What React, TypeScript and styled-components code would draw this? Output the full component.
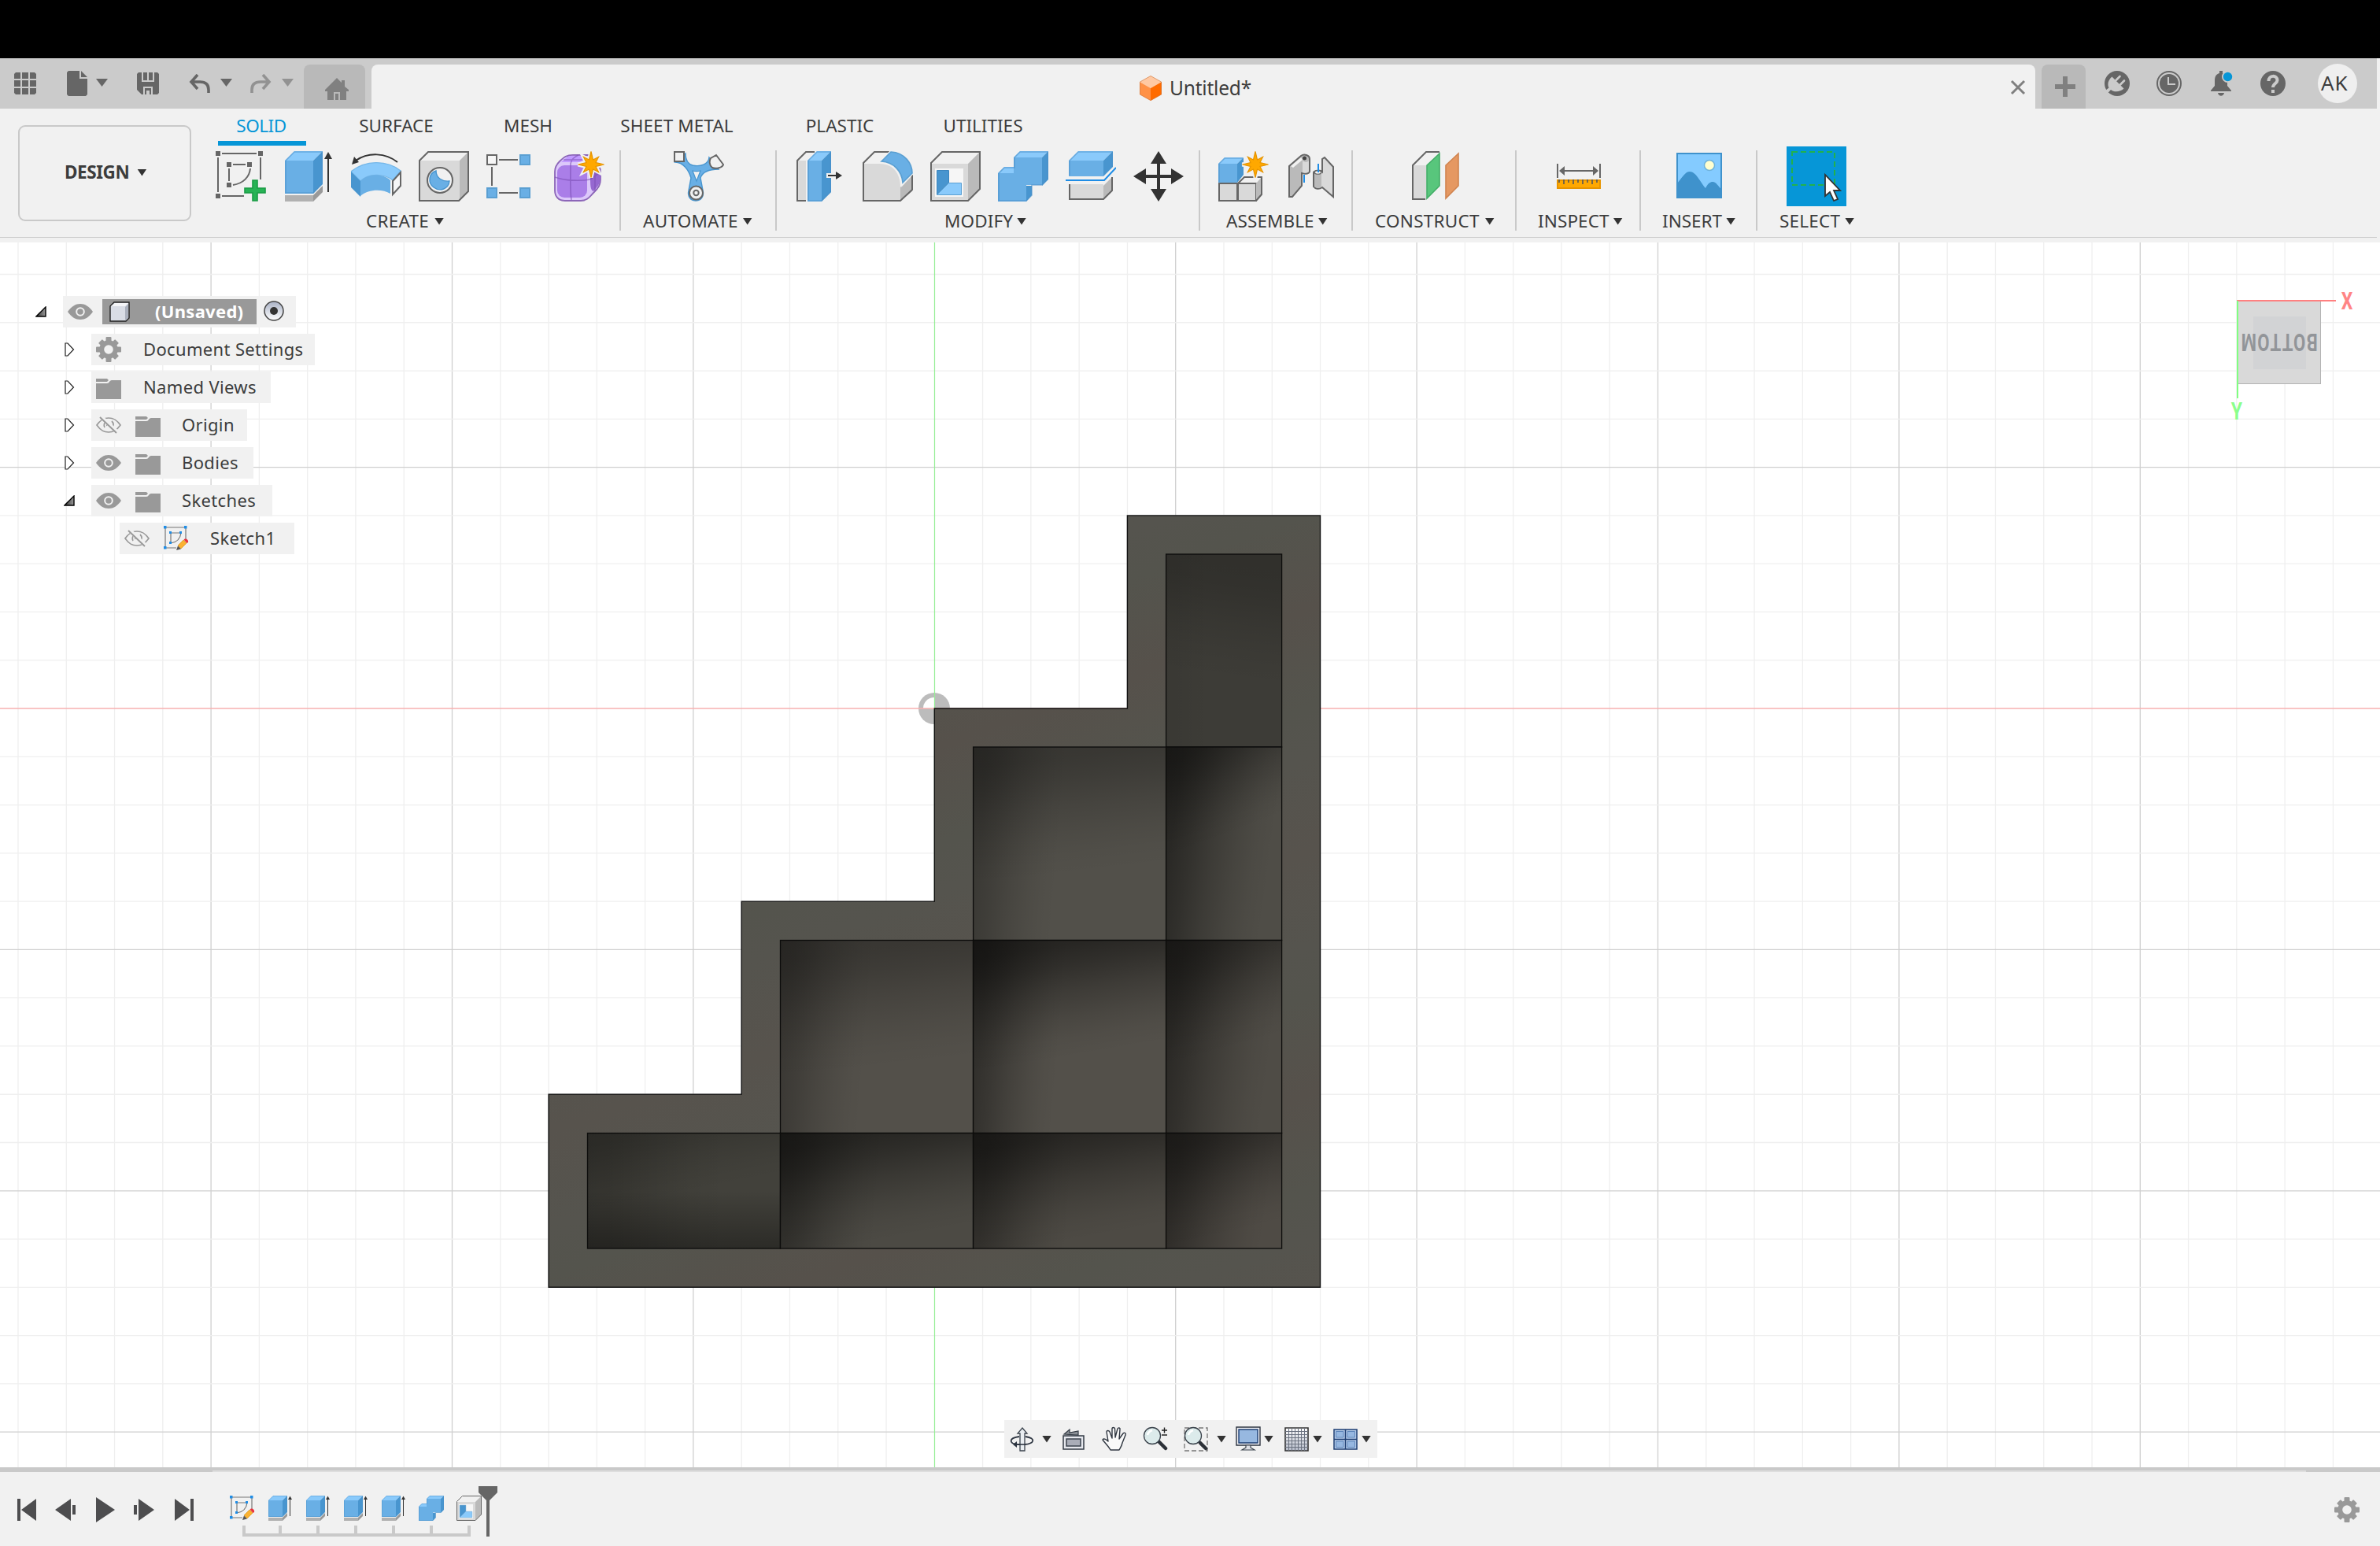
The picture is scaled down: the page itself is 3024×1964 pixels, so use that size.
import React from 'react';
import styled, { createGlobalStyle } from 'styled-components';

const sans = '"Noto Sans", "Open Sans", sans-serif';
const C = {
  ink: '#3c3c3c', icon: '#666', panel: '#f1f1f1', bar: '#cbcbcb', rule: '#c9c9c9',
  blue: '#0696d7', front: '#69afe5', light: '#8acafb', side: '#4895cf', edge: '#5a9fd2',
  grey: '#d9d9d9', greySide: '#bababa',
};

const Global = createGlobalStyle`
  html, body { margin: 0; background: #fff; overflow: hidden; }
  * { box-sizing: border-box; }
  svg { display: block; flex: none; }
`;

const Screen = styled.div`
  width: 3024px; height: 1964px; display: flex; flex-direction: column;
  font-family: ${sans}; color: ${C.ink}; background: ${C.panel}; overflow: hidden;
`;
const Notch = styled.div`height: 74px; flex: none; background: #000;`;

/* ---------- title bar ---------- */
const TitleBar = styled.header`
  height: 64px; width: 3020px; flex: none; display: flex; background: ${C.bar};
`;
const QuickTools = styled.div`width: 386px; display: flex; align-items: flex-start; padding-left: 18px;`;
const Slot = styled.div<{ $l?: number; $t?: number }>`
  flex: none; margin-left: ${p => p.$l ?? 0}px; margin-top: ${p => p.$t ?? 0}px;
`;
const SideTab = styled.div<{ $w: number }>`
  width: ${p => p.$w}px; height: 56px; margin-top: 8px; flex: none; background: #b9b9b9;
  border-radius: 8px 8px 0 0; display: flex; justify-content: center;
`;
const DocTab = styled.div`
  width: 2114px; height: 56px; margin: 8px 8px 0 8px; flex: none; background: ${C.panel};
  border-radius: 8px 8px 0 0; display: flex; align-items: flex-start;
`;
const DocName = styled.div`
  margin-left: 10px; margin-top: 12px; width: 1068px; font-size: 24.5px; line-height: 36px;
  letter-spacing: -0.2px; white-space: nowrap;
`;
const Account = styled.div`display: flex; align-items: flex-start;`;
const Avatar = styled.div`
  width: 50px; height: 50px; border-radius: 50%; background: #efefef; margin: 7px 0 0 41px;
  font-size: 26px; line-height: 49px; padding-left: 4px; white-space: nowrap; letter-spacing: 0.8px;
`;

/* ---------- ribbon ---------- */
const Ribbon = styled.div`
  height: 164px; width: 3020px; flex: none; display: flex; border-bottom: 1px solid ${C.rule};
`;
const WorkspaceButton = styled.button`
  width: 220px; height: 122px; margin: 21px 0 0 23px; flex: none; padding: 0 0 2px 57px; background: none;
  border: 2px solid ${C.rule}; border-radius: 9px; display: flex; align-items: center; gap: 10px;
  font: 700 22.5px/30px ${sans}; color: ${C.ink}; letter-spacing: -0.4px;
`;
const RibbonBody = styled.div`display: flex; flex-direction: column;`;
const TabRow = styled.nav`height: 53px; display: flex;`;
const Tab = styled.div<{ $ml: number; $w: number; $ls?: number; $on?: boolean }>`
  margin-left: ${p => p.$ml}px; width: ${p => p.$w}px; height: 47px; flex: none;
  padding: 6px ${p => (p.$on ? 2 : 0)}px 0 0; text-align: center; white-space: nowrap;
  font-size: 22.5px; line-height: 32px; letter-spacing: ${p => p.$ls ?? 0}px;
  color: ${p => (p.$on ? C.blue : C.ink)};
  border-bottom: 6px solid ${p => (p.$on ? C.blue : 'transparent')};
`;
const GroupRow = styled.div`display: flex; height: 102px;`;
const Group = styled.section<{ $w: number }>`
  width: ${p => p.$w}px; flex: none; display: flex; flex-direction: column;
  border-right: 2px solid ${C.rule};
  &:last-child { border-right: none; }
`;
const IconRow = styled.div<{ $pl: number }>`
  display: flex; gap: 22px; padding-left: ${p => p.$pl}px; height: 64px; margin-top: 1px;
`;
const GroupLabel = styled.div<{ $pl: number; $ls: number; $gap: number }>`
  display: flex; align-items: center; padding-left: ${p => p.$pl}px; margin-top: 9px; height: 32px;
  font-size: 22.5px; line-height: 32px; letter-spacing: ${p => p.$ls}px; gap: ${p => p.$gap}px; white-space: nowrap;
`;
const Selected = styled.div`
  width: 76px; height: 76px; margin: -6px; padding: 6px; background: ${C.blue};
`;
const Caret = styled.i<{ $c?: string; $w?: number; $h?: number }>`
  display: block; flex: none; width: ${p => p.$w ?? 12}px; height: ${p => p.$h ?? 9}px;
  background: ${p => p.$c ?? '#333'}; clip-path: polygon(0 0, 100% 0, 50% 100%);
`;

/* ---------- canvas ---------- */
const Canvas = styled.main`
  position: relative; height: 1556px; margin-top: 6px; flex: none; background: #fff; overflow: hidden;
`;
const Scene = styled.svg`position: absolute; left: 0; top: 0;`;
const Browser = styled.div`
  position: absolute; left: 0; top: 68px; display: flex; flex-direction: column; gap: 8px;
`;
const TreeRow = styled.div`display: flex; height: 40px; align-items: center;`;
const Twisty = styled.div<{ $w: number; $pl: number }>`width: ${p => p.$w}px; padding-left: ${p => p.$pl}px;`;
const Node = styled.div<{ $w: number }>`
  width: ${p => p.$w}px; height: 40px; background: ${C.panel}; padding-left: 6px;
  display: flex; align-items: center; white-space: nowrap;
`;
const NodeIcon = styled.div`width: 32px; height: 32px; margin-right: 18px; flex: none;`;
const NodeText = styled.span<{ $nested: boolean }>`
  margin-left: ${p => (p.$nested ? 9 : 10)}px; margin-bottom: 2px; font-size: 22px; line-height: 36px; letter-spacing: 0.35px;
`;
const RootChip = styled.div`
  margin-left: -6px; width: 196px; height: 32px; background: #999; color: #fff; flex: none;
  display: flex; align-items: center; padding-left: 8px;
  font-size: 22px; font-weight: 700; line-height: 30px; letter-spacing: 0.3px;
`;
const RootName = styled.span`margin-left: 31px; margin-bottom: 2px;`;
const NavBar = styled.div`
  position: absolute; left: 1276px; top: 1496px; width: 474px; height: 48px; background: ${C.panel};
  display: flex; align-items: center; padding-left: 7px;
`;
const ViewCube = styled.div`
  position: absolute; left: 2843px; top: 74px; width: 106px; height: 106px;
  background: linear-gradient(#d2d3d5, #d2d3d5) 19px 19px / 67px 67px no-repeat, #d9d9d9;
  border: 1px solid #b3b3b3; display: flex; align-items: center; justify-content: center;
`;
const CubeText = styled.div`
  transform: rotate(180deg) scaleX(0.69); font: 700 32px/32px Roboto, sans-serif; color: #929599;
  letter-spacing: 2px; margin-right: 2px;
`;
const AxisLine = styled.div<{ $c: string; $x: number; $y: number; $w: number; $h: number }>`
  position: absolute; left: ${p => p.$x}px; top: ${p => p.$y}px; width: ${p => p.$w}px; height: ${p => p.$h}px;
  background: ${p => p.$c};
`;
const AxisName = styled.div<{ $c: string; $x: number; $y: number }>`
  position: absolute; left: ${p => p.$x}px; top: ${p => p.$y}px; width: 30px; text-align: center;
  color: ${p => p.$c}; font: 700 32px/32px Roboto, sans-serif; transform: scaleX(0.72);
`;

/* ---------- timeline ---------- */
const Divider = styled.div`
  height: 6px; flex: none;
  background: linear-gradient(90deg, ${C.rule} 270px, #dedede 270px, #dedede 2930px, ${C.rule} 2930px) 0 4px / 100% 2px no-repeat, ${C.rule};
`;
const Timeline = styled.footer`height: 94px; flex: none; display: flex;`;
const Playback = styled.div`width: 292px; padding: 32px 0 0 22px; display: flex; gap: 24px;`;
const Features = styled.div`width: 320px; display: flex; flex-direction: column; padding-top: 30px;`;
const FeatureRow = styled.div`display: flex; gap: 16px;`;
const Rail = styled.div`
  margin: 6px 0 0 16px; width: 290px; height: 14px; border-bottom: 4px solid ${C.rule};
  display: flex; gap: 44px;
`;
const Tick = styled.i`
  width: 4px; height: 12px; flex: none; background: ${C.rule};
  &:first-child { margin-right: -2px; }
`;
const Marker = styled.div`margin: 18px 0 0 -4px;`;
const Settings = styled.div`margin: 32px 26px 0 auto;`;

/* ---------- icons ---------- */
const Svg = ({ s = 64, h, vb, children }: { s?: number; h?: number; vb?: string; children: React.ReactNode }) => (
  <svg width={s} height={h ?? s} viewBox={vb ?? `0 0 ${s} ${h ?? s}`} fill="none">{children}</svg>
);
const P = (p: React.SVGProps<SVGPathElement>) => <path {...p} />;

const Star = ({ x, y }: { x: number; y: number }) => {
  const pts = Array.from({ length: 16 }, (_, i) => {
    const r = i % 2 ? 6.5 : i % 4 === 0 ? 16.5 : 13.5;
    const a = (i * Math.PI) / 8;
    return `${x + r * Math.sin(a)},${y - r * Math.cos(a)}`;
  }).join(' ');
  return (
    <>
      <polygon points={pts} fill={C.panel} stroke={C.panel} strokeWidth="5" />
      <polygon points={pts} fill="#ffa800" stroke="#e69400" strokeWidth="1.2" />
    </>
  );
};

const SketchNew = () => (
  <Svg>
    <P stroke={C.icon} strokeWidth="2" d="M8 3H52M3 8V52M57 8V36M8 57H36M22 17H38M17 22V38M22 43C35 41 43 33 44 22" />
    <P fill={C.icon} d="M0 0h6v6H0zM54 0h6v6h-6zM0 54h6v6H0zM14 14h6v6h-6zM40 14h6v6h-6zM14 40h6v6h-6z" />
    <P fill="#27b355" stroke="#1b9c46" strokeWidth="1.6" d="M47 37h6v10h10v6H53v10h-6V53H37v-6h10z" />
  </Svg>
);
const Extrude = ({ s = 64 }: { s?: number }) => (
  <Svg s={s} vb="0 0 64 64">
    <P fill="#b1b1b1" d="M2 56H38V64H2z" /><P fill="#999" d="M38 56L50 44V52L38 64z" />
    <P fill={C.front} d="M2 12H38V54H2z" /><P fill={C.light} d="M2 12L14 0H50L38 12z" /><P fill={C.side} d="M38 12L50 0V42L38 54z" />
    <P stroke="#4a90c8" strokeOpacity=".55" strokeWidth="1.6" d="M3 12L14 1H49V41L38 53H3z" />
    <P stroke="#333" strokeWidth="2" d="M57 8V52" /><P fill="#333" d="M57 1L62 10H52z" />
  </Svg>
);
const Revolve = () => (
  <Svg>
    <P stroke="#333" strokeWidth="2" d="M59 14C44 2 22 1 6 12" /><P fill="#333" d="M1 17L4 7L10 14z" />
    <P fill={C.light} stroke="#76b7e8" strokeWidth="1.4" d="M0 26C18 11 46 11 63 25L53 37C42 28 22 28 12 38z" />
    <P fill={C.side} d="M0 26L12 38V58L0 46z" />
    <P fill={C.front} d="M12 38C22 28 40 28 50 37V54C40 48 22 48 12 57z" />
    <P fill="#f6f6f6" stroke={C.icon} strokeWidth="2" d="M53 38L63 27V44L53 55z" />
  </Svg>
);
const Hole = () => (
  <Svg>
    <P fill={C.panel} d="M1 12L12 1H63L52 12z" /><P fill={C.greySide} d="M52 12L63 1V51L52 63z" /><P fill={C.grey} d="M1 12H52V63H1z" />
    <P stroke={C.icon} strokeWidth="2" d="M1 12L12 1H63V51L51 63H1z" />
    <circle cx="27" cy="37" r="16" fill={C.panel} stroke={C.icon} strokeWidth="2" />
    <P fill={C.front} stroke={C.side} strokeWidth="1.4" d="M22 25C13 28 11 40 19 46C27 52 38 48 39 38C30 39 22 34 22 25z" />
  </Svg>
);
const Pattern = () => (
  <Svg>
    <P stroke={C.icon} strokeWidth="2" fill="#f6f6f6" d="M1 5h12v12H1z" />
    <P stroke={C.icon} strokeWidth="2" d="M16 11H40M7 20V44M16 53H40" />
    <P fill={C.front} stroke={C.edge} strokeWidth="2" d="M43 5h12v12H43zM1 47h12v12H1zM43 47h12v12H43z" />
  </Svg>
);
const Form = () => (
  <Svg>
    <P fill="#dcc8fa" stroke="#8c66b8" strokeWidth="1.8" d="M1 26C1 20 3 17 7 13C13 7 16 5 24 5H44C54 10 59 18 59 28V36C59 43 56 47 51 52C44 59 42 63 34 63H14C6 63 1 58 1 50z" />
    <rect x="4" y="18" width="38" height="41" rx="9" fill="#aa7ee8" />
    <P fill="#c199ff" d="M9 14L16 8C20 5 24 6 40 6L34 14z" />
    <P fill="#9668d0" d="M46 34C46 30 52 22 59 26V34C59 42 54 46 50 51C46 50 46 42 46 34z" />
    <P stroke="#7c4fb4" strokeOpacity=".6" strokeWidth="1.6" d="M22 62C20 50 21 34 21 16C22 10 26 7 31 5M1 33C14 38 34 38 46 36L59 26M12 11C24 11 30 11 38 11M52 51V26" />
    <Star x={47} y={17} />
  </Svg>
);
const AutoModel = () => (
  <Svg>
    <P fill={C.front} stroke={C.side} strokeWidth="1.4" d="M2 14C12 14 19 24 22 34L19 50C17 58 22 63 28 63S39 58 37 50L34 34C37 25 46 23 57 23L45 8C44 17 34 20 24 18C17 16 15 10 15 3z" />
    <P fill={C.panel} stroke={C.side} strokeWidth="1.2" d="M24 25C28 26 30 26 34 25L29 38z" />
    <P fill={C.panel} stroke={C.icon} strokeWidth="2" d="M1 1H13V13H1zM54 5L63 17C62 21 54 23 49 21C45 18 45 12 47 9z" />
    <circle cx="28.5" cy="53" r="8.5" fill={C.panel} stroke={C.icon} strokeWidth="2" /><circle cx="28.5" cy="53" r="3.2" fill={C.panel} stroke={C.icon} strokeWidth="2" />
  </Svg>
);
const PressPull = () => (
  <Svg>
    <P fill={C.grey} d="M3 12H14V63H3z" /><P fill={C.panel} d="M3 12L14 1H24L14 12z" />
    <P stroke={C.icon} strokeWidth="2" d="M14 63H3V12L14 1H25" />
    <P fill={C.front} d="M16 12H34V64H16z" /><P fill={C.light} d="M16 12L28 0H46L34 12z" /><P fill={C.side} d="M34 12L46 0V52L34 64z" />
    <P stroke="#4a90c8" strokeOpacity=".55" strokeWidth="1.6" d="M17 12L28 1H45V52L34 63H17z" />
    <P stroke={C.panel} strokeWidth="6" d="M40 31H52" /><P stroke="#333" strokeWidth="2" d="M42 31H54" /><P fill="#333" d="M52 26L60 31L52 36z" />
  </Svg>
);
const Fillet = () => (
  <Svg>
    <P fill={C.panel} d="M1 15L15 1H36L24 15z" /><P fill={C.grey} d="M1 16H22C40 16 48 30 48 46V63H1z" /><P fill={C.greySide} d="M48 46L63 30V51L48 63z" />
    <P stroke={C.icon} strokeWidth="2" d="M34 1H15L1 15V63H48L63 49V30" />
    <P fill={C.front} stroke={C.panel} strokeWidth="4" d="M24 13L36 1C54 2 63 16 63 28L51 41C50 26 40 14 24 13z" />
    <P fill={C.front} stroke={C.edge} strokeWidth="1.6" d="M24 13L36 1C54 2 63 16 63 28L51 40C50 26 40 14 24 13z" />
  </Svg>
);
const Shell = ({ s = 64 }: { s?: number }) => (
  <Svg s={s} vb="0 0 64 64">
    <P fill={C.panel} d="M1 16L15 1H63L48 16z" /><P fill={C.greySide} d="M48 16L63 1V48L48 63z" /><P fill={C.grey} d="M1 16H48V63H1z" />
    <P stroke={C.icon} strokeWidth="2" d="M1 15L15 1H63V48L48 63H1z" />
    <P fill="#f6f6f6" d="M6 22H42V58H6z" />
    <P fill={C.side} stroke="#3c86be" d="M8.500 24.500H23.500V40L8.500 55z" /><P fill={C.light} stroke={C.edge} d="M23.500 40.500H39.500V55.500H8.500z" />
  </Svg>
);
const Combine = ({ s = 64 }: { s?: number }) => (
  <Svg s={s} vb="0 0 64 64">
    <P fill={C.front} d="M0 28H20V8H56V43H36V64H0z" /><P fill={C.light} d="M20 8L28 0H64L56 8zM0 28L8 20H20V28z" />
    <P fill={C.side} d="M56 8L64 0V36L56 44zM36 44H43V56L36 64z" />
    <P stroke="#4a90c8" strokeOpacity=".6" strokeWidth="1.6" d="M1 28L8 21H21V8L28 1H63V35L56 43H43V56L36 63H1z" />
  </Svg>
);
const Split = () => (
  <Svg>
    <P fill={C.front} d="M4 12H48V32H4z" /><P fill={C.light} d="M4 12L16 0H60L48 12z" /><P fill={C.side} d="M48 12L60 0V20L48 32z" />
    <P stroke="#4a90c8" strokeOpacity=".55" strokeWidth="1.6" d="M5 31V12L16 1H59V20" />
    <P stroke="#1f8de6" strokeWidth="2" d="M0 37H49L64 21" />
    <P fill={C.grey} d="M5 42H48V61H5z" /><P fill={C.greySide} d="M48 44L59 33V50L48 61z" />
    <P stroke={C.icon} strokeWidth="2" d="M5 42V61H48L59 50V33" />
  </Svg>
);
const Move = () => (
  <Svg>
    <P stroke="#333" strokeWidth="4" d="M32 12V52M12 32H52" />
    <P fill="#333" d="M32 0L42 16H22zM32 64L42 48H22zM0 32L16 22V42zM64 32L48 22V42z" />
  </Svg>
);
const Component = () => (
  <Svg>
    <P fill={C.front} d="M0 16H24V40H0z" /><P fill={C.light} d="M0 16L8 8H32L24 16z" /><P fill={C.side} d="M24 16L32 8V30L24 40z" />
    <P stroke="#4a90c8" strokeOpacity=".55" strokeWidth="1.6" d="M1 39V16L8 9H31" />
    <P fill={C.grey} stroke={C.icon} strokeWidth="2" d="M1 41H24V63H1zM25 41H48V63H25z" />
    <P fill={C.panel} d="M25 40L33 33H55L48 40z" /><P fill={C.greySide} d="M48 41L55 33V55L48 63z" />
    <P stroke={C.icon} strokeWidth="2" d="M25 41L33 33H55V55L48 63" />
    <Star x={47} y={17} />
  </Svg>
);
const Joint = () => (
  <Svg>
    <P fill={C.greySide} stroke={C.icon} strokeWidth="2" d="M4 19L19 6C23 3 30 5 30 10V26C29 29 24 29 20 28V44L8 58H4z" />
    <P fill={C.panel} d="M6 19L19 8L21 11L9 21z" /><P fill={C.grey} d="M21 12C24 15 28 14 29 12V26C27 28 23 28 21 27z" />
    <circle cx="23.500" cy="9" r="2.500" fill="#444" />
    <P fill={C.grey} stroke={C.icon} strokeWidth="2" d="M35 27C36 24 44 24 46 26V10L49 8L60 20V58L46 46C42 49 37 48 35 45z" />
    <P fill={C.greySide} d="M36 28H45V45C42 48 38 47 36 45z" /><P fill="#f6f6f6" stroke={C.icon} strokeWidth="1.200" d="M36 27C37 24 44 24 45 27C44 30 37 30 36 27z" />
    <P stroke="#1f8de6" strokeWidth="2" d="M23 30V40M41 16V27" />
  </Svg>
);
const Plane = () => (
  <Svg>
    <P fill={C.grey} d="M3 18H20V62H3z" /><P fill={C.panel} d="M3 18L20 1H37L20 18z" />
    <P stroke={C.icon} strokeWidth="2" d="M19 61H3V18L20 1H37" />
    <P fill="#58c67c" stroke="#43ad67" strokeWidth="1.600" d="M21 18L37 3V44L21 60z" />
    <P fill="#e59862" stroke="#d08450" strokeWidth="1.600" d="M45 18L61 3V44L45 60z" />
  </Svg>
);
const Measure = () => (
  <Svg>
    <P stroke={C.icon} strokeWidth="2" d="M5 16V34M59 16V34M10 25H54" /><P fill={C.icon} d="M7 25L14 19V31zM57 25L50 19V31z" />
    <P fill="#ffa800" stroke="#e69400" strokeWidth="2" d="M5 37H59V47H5z" />
    <P stroke="#555" strokeWidth="1.600" d="M7 36V40M13 36V42M19 36V40M25 36V42M31 36V40M37 36V42M43 36V40M49 36V42M55 36V40" />
  </Svg>
);
const Picture = () => (
  <Svg>
    <P fill="#84cbff" d="M4 2H62V60H4z" />
    <P fill="#3f92cc" d="M5 41C11 34 15 26 21 26C29 26 34 39 41 47C44 41 47 39 50 39C55 39 57 45 61 48V59H5z" />
    <circle cx="46" cy="18" r="6.500" fill="#ffffcf" stroke="#6fb3dc" strokeWidth="1.500" />
    <P stroke="#3f92cc" strokeWidth="2" d="M5 3H61V59H5z" />
  </Svg>
);
const SelectIcon = () => (
  <Svg>
    <P stroke="#22b14c" strokeWidth="2" strokeDasharray="7 4" d="M1 1H55V43H1z" />
    <P fill="#fff" stroke="#333" strokeWidth="1.800" d="M43 30V57L49 52L54 63L59 61L54 50H62z" />
  </Svg>
);

const gearTeeth = [0, 45, 90, 135, 180, 225, 270, 315];
const Gear = () => (
  <Svg s={32}>
    {gearTeeth.map(a => <rect key={a} x="12.500" y={a % 90 ? 1 : 0} width="7" height="8" rx="1" fill="#999" transform={`rotate(${a} 16 16)`} />)}
    <circle cx="16" cy="16" r="8.800" stroke="#999" strokeWidth="6" />
  </Svg>
);
const Folder = () => (
  <Svg s={32}>
    <P fill="#999" d="M0 5H14L16 7L14 9H0z" /><P fill="#999" d="M0 11H14C17 11 17 7 20 7H32V31H0z" />
  </Svg>
);
const Eye = () => (
  <Svg s={32}>
    <P fill="#999" d="M0 16C5 9 10 6 16 6S27 9 32 16C27 23 22 26 16 26S5 23 0 16z" />
    <circle cx="16" cy="16" r="4.800" stroke={C.panel} strokeWidth="2" />
  </Svg>
);
const EyeOff = () => (
  <Svg s={32}>
    <P stroke="#999" strokeWidth="1.700" d="M1 16C6 9 10 7 16 7S26 9 31 16C26 23 22 25 16 25S6 23 1 16z" />
    <P stroke="#999" strokeWidth="1.700" d="M11 19A6 6 0 0 1 13 11M20 20A6 6 0 0 0 20 11M14 17A3 3 0 0 1 17 13" />
    <P stroke={C.panel} strokeWidth="5" d="M7 6L27 25" /><P stroke="#999" strokeWidth="1.900" d="M5 6L26 26" />
  </Svg>
);
const SketchEdit = () => (
  <Svg s={32}>
    <P stroke="#777" strokeWidth="1.200" d="M2 2H28V18M2 2V28H16M9 9H22M9 9V22M9 22C16 21 21 17 22 9" />
    <P fill="#1f8de6" d="M0 0h3.500v3.500H0zM26 0h3.500v3.500H26zM0 26h3.500v3.500H0zM7 7h3v3H7zM20 7h3v3h-3zM7 20h3v3H7z" />
    <P fill="#fbb232" stroke="#d99318" strokeWidth=".7" d="M18 25L25 18L29 22L22 29z" />
    <P fill="#e9313c" d="M25.500 17.500C27 15 32 17 31 21L29.500 22z" /><P fill="#555" d="M18 25.500L22 29.500L16 31z" />
  </Svg>
);
const TwistyOpen = () => <Svg s={14}><defs><linearGradient id="tw" x1="0" x2="1"><stop stopColor="#333" /><stop offset="1" stopColor="#999" /></linearGradient></defs><P fill="url(#tw)" stroke="#000" strokeWidth="1.400" d="M1 13L13 1V13z" /></Svg>;
const TwistyShut = () => <Svg s={13} h={18}><P fill="#fff" stroke="#222" strokeWidth="1.200" d="M1 1H4L11.500 9L4 17H1z" /></Svg>;

/* ---------- model ---------- */
const GRID = 61.28, OX = 1187.3, OY = 592;
const FALLOFF: [number, number][] = [[0, 1], [0.15, 0.93], [0.3, 0.75], [0.5, 0.46], [0.7, 0.22], [0.85, 0.08], [1, 0]];

type Shade = { a: number; x: number; y: number };
type CellSpec = { x: number; y: number; w: number; h: number; base: string; left: Shade; top: Shade; bottom?: number };
const mk = (x: number, y: number, w: number, h: number, base: string, left: Shade, top: Shade, bottom?: number): CellSpec =>
  ({ x, y, w, h, base, left, top, bottom });
const cells: CellSpec[] = [
  mk(1481.6, 396, 147, 245, '#3d3c37', { a: 0.06, x: 60, y: 0 }, { a: 0.2, x: -20, y: 150 }),
  mk(1236.6, 641, 245, 245.500, '#52504a', { a: 0.3, x: 120, y: 10 }, { a: 0.33, x: 20, y: 175 }),
  mk(1481.6, 641, 147, 245.500, '#4f4d47', { a: 0.5, x: 150, y: 20 }, { a: 0.4, x: 50, y: 125 }),
  mk(991.5, 886.5, 245, 245, '#53504a', { a: 0.3, x: 120, y: 10 }, { a: 0.33, x: 20, y: 175 }),
  mk(1236.6, 886.5, 245, 245, '#53504a', { a: 0.42, x: 120, y: 10 }, { a: 0.56, x: 28, y: 165 }),
  mk(1481.6, 886.5, 147, 245, '#4f4c46', { a: 0.48, x: 150, y: 20 }, { a: 0.42, x: 45, y: 150 }),
  mk(746.5, 1131.5, 245, 146.500, '#42413b', { a: 0.18, x: 180, y: 0 }, { a: 0.22, x: 20, y: 100 }, 0.34),
  mk(991.5, 1131.5, 245, 146.500, '#4c4a44', { a: 0.36, x: 130, y: 10 }, { a: 0.52, x: 28, y: 155 }),
  mk(1236.6, 1131.5, 245, 146.500, '#4d4a44', { a: 0.36, x: 130, y: 10 }, { a: 0.52, x: 28, y: 155 }),
  mk(1481.6, 1131.5, 147, 146.500, '#4f4b45', { a: 0.42, x: 140, y: 20 }, { a: 0.42, x: 35, y: 140 }),
];
const ShadeGradient = ({ id, c, s }: { id: string; c: CellSpec; s: Shade }) => (
  <linearGradient id={id} gradientUnits="userSpaceOnUse" x1={c.x} y1={c.y} x2={c.x + s.x} y2={c.y + s.y}>
    {FALLOFF.map(([o, k]) => <stop key={o} offset={o} stopColor="#000" stopOpacity={s.a * k} />)}
  </linearGradient>
);
const gridLines = (o: number, max: number) => {
  const out: { p: number; major: boolean }[] = [];
  for (let i = -25; i <= 35; i++) {
    const p = o + i * GRID;
    if (i !== 0 && p > 0 && p < max) out.push({ p, major: i % 5 === 0 });
  }
  return out.sort((a, b) => Number(a.major) - Number(b.major));
};

const ModelScene = () => (
  <Scene width="3024" height="1556" viewBox="0 0 3024 1556" fill="none">
    <defs>
      <linearGradient id="body" gradientUnits="userSpaceOnUse" x1="700" y1="1130" x2="800" y2="1400" spreadMethod="reflect">
        <stop offset="0" stopColor="#57534d" /><stop offset=".4" stopColor="#55544e" /><stop offset=".6" stopColor="#54544d" /><stop offset="1" stopColor="#56514b" />
      </linearGradient>
      {cells.map((c, i) => (
        <React.Fragment key={i}>
          <ShadeGradient id={`l${i}`} c={c} s={c.left} />
          <ShadeGradient id={`t${i}`} c={c} s={c.top} />
          <linearGradient id={`b${i}`} x2="0" y2="1"><stop offset=".5" stopColor="#000" stopOpacity="0" /><stop offset="1" stopColor="#000" stopOpacity={c.bottom ?? 0} /></linearGradient>
        </React.Fragment>
      ))}
    </defs>
    {gridLines(OX, 3024).map(g => <line key={g.p} x1={g.p} x2={g.p} y1="0" y2="1556" stroke={g.major ? '#cfcfcf' : '#efefef'} strokeWidth="1.300" />)}
    {gridLines(OY, 1556).map(g => <line key={g.p} y1={g.p} y2={g.p} x1="0" x2="3024" stroke={g.major ? '#cfcfcf' : '#efefef'} strokeWidth="1.300" />)}
    <circle cx="1187" cy="592" r="20" fill="#bcbcbc" />
    <P fill="#fff" d="M1187 592H1173A14 14 0 0 1 1187 578z" />
    <P stroke="#f7b0b0" strokeWidth="1.400" d="M0 592H3024" /><P stroke="#97ee97" strokeWidth="1.200" d="M1187.500 0V1556" />
    <P fill="url(#body)" stroke="#111" strokeWidth="1.400" d="M1432.400 346.900H1677.500V1327.200H697.100V1082.100H942.200V837.100H1187.300V592H1432.400z" />
    {cells.map((c, i) => (
      <g key={i}>
        {[c.base, `url(#l${i})`, `url(#t${i})`, `url(#b${i})`].map(f => <rect key={f} x={c.x} y={c.y} width={c.w} height={c.h} fill={f} />)}
        <rect x={c.x} y={c.y} width={c.w} height={c.h} stroke="#0c0c0b" strokeWidth="1.300" />
      </g>
    ))}
  </Scene>
);

const rows = [
  { w: 284, pad: 116, icons: [<Gear key="g" />], text: 'Document Settings' },
  { w: 228, pad: 116, icons: [<Folder key="f" />], text: 'Named Views' },
  { w: 198, pad: 116, icons: [<EyeOff key="e" />, <Folder key="f" />], text: 'Origin' },
  { w: 206, pad: 116, icons: [<Eye key="e" />, <Folder key="f" />], text: 'Bodies' },
  { w: 230, pad: 116, open: true, icons: [<Eye key="e" />, <Folder key="f" />], text: 'Sketches' },
  { w: 222, pad: 152, leaf: true, icons: [<EyeOff key="e" />, <SketchEdit key="s" />], text: 'Sketch1' },
];

const groups = [
  { w: 546, pl: 31, lx: 222, ls: 0.25, gap: 7, label: 'CREATE', icons: [<SketchNew key="1" />, <Extrude key="2" />, <Revolve key="3" />, <Hole key="4" />, <Pattern key="5" />, <Form key="6" />] },
  { w: 198, pl: 67, lx: 28, ls: 0.25, gap: 6, label: 'AUTOMATE', icons: [<AutoModel key="1" />] },
  { w: 538, pl: 23, lx: 213, ls: 0.1, gap: 5, label: 'MODIFY', icons: [<PressPull key="1" />, <Fillet key="2" />, <Shell key="3" />, <Combine key="4" />, <Split key="5" />, <Move key="6" />] },
  { w: 194, pl: 23, lx: 33, ls: 0.1, gap: 5, label: 'ASSEMBLE', icons: [<Component key="1" />, <Joint key="2" />] },
  { w: 208, pl: 73, lx: 28, ls: 0.25, gap: 7, label: 'CONSTRUCT', icons: [<Plane key="1" />] },
  { w: 158, pl: 47, lx: 27, ls: 0.1, gap: 5, label: 'INSPECT', icons: [<Measure key="1" />] },
  { w: 148, pl: 41, lx: 27, ls: 0, gap: 5, label: 'INSERT', icons: [<Picture key="1" />] },
  { w: 150, pl: 43, lx: 28, ls: 0.2, gap: 6, label: 'SELECT', icons: [<Selected key="1"><SelectIcon /></Selected>] },
];

const PlaybackIcons = () => (
  <>
    <Svg s={24} h={30}><P fill="#4d4d4f" d="M0 2H4V30H0zM5 16L24 2V30z" /></Svg>
    <Svg s={28} h={30}><P fill="#4d4d4f" d="M0 16L20 2V30zM22 10H26V22H22z" /></Svg>
    <Svg s={24} h={32}><P fill="#4d4d4f" d="M0 0L24 16L0 32z" /></Svg>
    <Svg s={28} h={30}><P fill="#4d4d4f" d="M26 16L6 2V30zM0 10H4V22H0z" /></Svg>
    <Svg s={24} h={30}><P fill="#4d4d4f" d="M20 2H24V30H20zM19 16L0 2V30z" /></Svg>
  </>
);

const NavTools = () => (
  <NavBar>
    <Slot><Svg s={32}>
      <P stroke="#2c3440" strokeWidth="1.800" d="M12 13C-2 15 -1 22 10 23M20 13C34 15 31 22 19 23H8" /><P fill="#2c3440" d="M4 23L9 19V27z" />
      <P fill="#e9edf1" stroke="#3b434d" strokeWidth="1.300" d="M16 2L22 9H19V31H13V9H10z" /><P stroke="#2c3440" strokeWidth="1.600" d="M10 23H20" />
    </Svg></Slot>
    <Slot $l={9}><Caret /></Slot>
    <Slot $l={13}><Svg s={30}>
      <P fill="#8b9096" stroke="#333b45" strokeWidth="1.200" d="M3 9L10 3V7L21 5V10z" />
      <P fill="#e6e8ee" stroke="#333b45" strokeWidth="1.500" d="M2 11H28V28H2z" /><P fill="#a9adb8" stroke="#3b434d" strokeWidth="1.500" d="M6 15H24V24H6z" />
    </Svg></Slot>
    <Slot $l={21}><Svg s={32}>
      <P fill="#f9f9f9" stroke="#2f3640" strokeWidth="1.400" strokeLinejoin="round" d="M11 30C9 26 3 20 1 17C2 15 5 16 8 19L6 7C6 5 9 5 10 7L13 15L13 3C13 1 16 1 16.500 3L17 14L20 3C21 1 23.500 2 23 4L22 16L27 9C29 7 31 9 30 11L26 21C25 26 23 28 22 30z" />
    </Svg></Slot>
    <Slot $l={20}><Svg s={32}>
      <P stroke="#2c3138" strokeWidth="4.500" strokeLinecap="round" d="M21 20L29 28" />
      <circle cx="12" cy="12" r="10.500" fill="#dcebeb" stroke="#3a424b" strokeWidth="1.300" /><P stroke="#fff" strokeWidth="2.500" d="M6 11C7 7 9 6 12 5" />
      <P stroke="#222" strokeWidth="1.400" d="M24 5H31M27.500 1.500V8.500M24 11H31" />
    </Svg></Slot>
    <Slot $l={20}><Svg s={32}>
      <P stroke="#777" strokeWidth="1.300" strokeDasharray="6 3" d="M1 2H30V31H1z" />
      <P stroke="#2c3138" strokeWidth="4.500" strokeLinecap="round" d="M21 21L28 28" />
      <circle cx="12" cy="12" r="10.500" fill="#dcebeb" stroke="#3a424b" strokeWidth="1.300" /><P stroke="#fff" strokeWidth="2.500" d="M6 11C7 7 9 6 12 5" />
    </Svg></Slot>
    <Slot $l={10}><Caret /></Slot>
    <Slot $l={12}><Svg s={32}>
      <P fill="#f1f2f6" stroke="#2d3440" strokeWidth="1.400" d="M1 1H31V24H1z" /><P fill="#97b8e0" stroke="#1f3f73" strokeWidth="1.400" d="M4 4H28V21H4z" />
      <P fill="#dfe1e6" stroke="#3b434d" strokeWidth="1.200" d="M13 24H19V27L24 30H8L13 27z" />
    </Svg></Slot>
    <Slot $l={4}><Caret /></Slot>
    <Slot $l={14}><Svg s={31}>
      <defs><linearGradient id="gr" x2="0" y2="1"><stop stopColor="#fff" /><stop offset="1" stopColor="#b4bac8" /></linearGradient></defs>
      <P fill="url(#gr)" stroke="#333" strokeWidth="1.600" d="M1 1H30V30H1z" />
      <P stroke="#6b7280" strokeWidth="1" d="M5.500 1V30M9.500 1V30M13.500 1V30M17.500 1V30M21.500 1V30M25.500 1V30M1 5.500H30M1 9.500H30M1 13.500H30M1 17.500H30M1 21.500H30M1 25.500H30" />
    </Svg></Slot>
    <Slot $l={5}><Caret /></Slot>
    <Slot $l={14}><Svg s={31}>
      <P fill="#b7cdea" stroke="#1f3f73" strokeWidth="1.500" d="M1 3H30V28H1zM15.500 3V28M1 15.500H30" />
      <P fill="#96b7e0" stroke="#5f86ba" strokeWidth="1" d="M3.500 5.500H13V13H3.500zM18 5.500H27.500V13H18zM3.500 18H13V25.500H3.500zM18 18H27.500V25.500H18z" />
    </Svg></Slot>
    <Slot $l={5}><Caret /></Slot>
  </NavBar>
);

export default function App() {
  return (
    <Screen>
      <Global />
      <Notch />
      <TitleBar>
        <QuickTools>
          <Slot $t={18}><Svg s={28}><P fill={C.icon} d="M2 0H8V8H0V2zM10 0H18V8H10zM20 0H26L28 2V8H20zM0 10H8V18H0zM10 10H18V18H10zM20 10H28V18H20zM0 20H8V28H2L0 26zM10 20H18V28H10zM20 20H28V26L26 28H20z" /></Svg></Slot>
          <Slot $l={39} $t={16}><Svg s={26} h={32}><P fill={C.icon} d="M2 0H16V10H26V30L24 32H2L0 30V2zM18 0L26 8H18z" /></Svg></Slot>
          <Slot $l={11} $t={26}><Caret $c={C.icon} $w={15} $h={10} /></Slot>
          <Slot $l={37} $t={18}><Svg s={28}><P fill={C.icon} fillRule="evenodd" d="M2 0H6V12H22V0H26L28 2V26L26 28H20V18H8V28H6L0 22V2zM8 0H13V10H8zM15 0H20V10H15zM10 20H18V28H16V23H12V28H10z" /></Svg></Slot>
          <Slot $l={38} $t={20}><Svg s={28} h={26}><P stroke={C.icon} strokeWidth="3.600" d="M25 24V20C25 12 20 10 14 10H3M11 1L3 10L11 19" /></Svg></Slot>
          <Slot $l={12} $t={26}><Caret $c={C.icon} $w={15} $h={10} /></Slot>
          <Slot $l={22} $t={20}><Svg s={28} h={26}><P stroke="#929292" strokeWidth="3.600" d="M3 24V20C3 12 8 10 14 10H25M17 1L25 10L17 19" /></Svg></Slot>
          <Slot $l={13} $t={26}><Caret $c="#929292" $w={15} $h={10} /></Slot>
        </QuickTools>
        <SideTab $w={78}>
          <Slot $l={6} $t={17}><Svg s={30} h={28}><P fill="#808080" d="M15 0L21 6V3H25V11L30 15V17H27V28H19V18H11V28H3V17H0V15zM13 20H17V28H13z" /></Svg></Slot>
        </SideTab>
        <DocTab>
          <Slot $l={976} $t={14}><Svg s={28} h={32}>
            <P fill="#ffc9a3" d="M14 0L28 8L14 16L0 8z" /><P fill="#ff9146" d="M0 8L14 16V32L0 24z" /><P fill="#ff6b00" d="M28 8L14 16V32L28 24z" />
            <P stroke="#c97a45" strokeOpacity=".6" d="M14 .5L27.500 8V24L14 31.500L.5 24V8z" />
          </Svg></Slot>
          <DocName>Untitled*</DocName>
          <Slot $t={19}><Svg s={20}><P stroke="#808080" strokeWidth="3" d="M2 2L18 18M18 2L2 18" /></Svg></Slot>
        </DocTab>
        <SideTab $w={56}><Slot $l={3} $t={15}><Svg s={26}><P fill="#808080" d="M10 0H16V10H26V16H16V26H10V16H0V10H10z" /></Svg></Slot></SideTab>
        <Account>
          <Slot $l={24} $t={16}><Svg s={32}>
            <circle cx="16" cy="16" r="16" fill={C.icon} />
            <P fill={C.bar} d="M9.500 7.500L24.500 22.500C20 27 12 27.500 8 24L2.500 30L-.5 26L5.500 21.500C3 17 5 11 9.500 7.500z" />
            <P stroke={C.bar} strokeWidth="2.600" strokeLinecap="round" d="M14.500 12L19.500 7M20 17.500L25 12.500" />
          </Svg></Slot>
          <Slot $l={34} $t={16}><Svg s={32}><circle cx="16" cy="16" r="15" stroke={C.icon} strokeWidth="2" /><circle cx="16" cy="16" r="12" fill={C.icon} /><P stroke={C.bar} strokeWidth="2" d="M15 8V17H24" /></Svg></Slot>
          <Slot $l={36} $t={16}><Svg s={30} h={32}>
            <P fill={C.icon} d="M12 0H16V3C20 4 22 8 22 13V19L27 25V26H1V25L6 19V12C6 7 8 4 12 3zM10 28H18C17 33 11 33 10 28z" />
            <circle cx="22.500" cy="7.500" r="7.500" fill={C.bar} /><circle cx="22.500" cy="7.500" r="5.700" fill={C.blue} />
          </Svg></Slot>
          <Slot $l={34} $t={16}><Svg s={32}><circle cx="16" cy="16" r="16" fill={C.icon} /><P stroke={C.bar} strokeWidth="4" d="M10.500 13C10.500 5 21.500 5 21.500 12C21.500 16 16 16 16 21" /><P fill={C.bar} d="M14 24H18V28H14z" /></Svg></Slot>
          <Avatar>AK</Avatar>
        </Account>
      </TitleBar>

      <Ribbon>
        <WorkspaceButton>DESIGN<Caret $w={12} $h={9} /></WorkspaceButton>
        <RibbonBody>
          <TabRow>
            <Tab $ml={34} $w={112} $ls={-0.5} $on>SOLID</Tab>
            <Tab $ml={55} $w={119}>SURFACE</Tab>
            <Tab $ml={48} $w={120}>MESH</Tab>
            <Tab $ml={50} $w={158} $ls={0.1}>SHEET METAL</Tab>
            <Tab $ml={68} $w={120}>PLASTIC</Tab>
            <Tab $ml={60} $w={124}>UTILITIES</Tab>
          </TabRow>
          <GroupRow>
            {groups.map(g => (
              <Group key={g.label} $w={g.w}>
                <IconRow $pl={g.pl}>{g.icons}</IconRow>
                <GroupLabel $pl={g.lx} $ls={g.ls} $gap={g.gap}>{g.label}<Caret $w={12} $h={9} /></GroupLabel>
              </Group>
            ))}
          </GroupRow>
        </RibbonBody>
      </Ribbon>

      <Canvas>
        <ModelScene />
        <Browser>
          <TreeRow>
            <Twisty $w={80} $pl={45}><TwistyOpen /></Twisty>
            <Node $w={296}>
              <NodeIcon><Eye /></NodeIcon>
              <RootChip>
                <Svg s={28}><P fill="#d9dde6" stroke="#222" strokeWidth="1.400" d="M2 7L7 2H26V22L22 26H2z" /><P fill="#f4f5f8" d="M3 7L8 3H25L21 7z" /><P fill="#aab0bd" d="M21 8L25 4V22L21 25z" /></Svg>
                <RootName>(Unsaved)</RootName>
              </RootChip>
              <Slot $l={8}><Svg s={28}><defs><linearGradient id="rd" x2="0" y2="1"><stop stopColor="#aab2c6" /><stop offset="1" stopColor="#fff" /></linearGradient></defs><circle cx="14" cy="13" r="12" fill="url(#rd)" stroke="#444" strokeWidth="1.500" /><circle cx="14" cy="13" r="5" fill="#333" /></Svg></Slot>
            </Node>
          </TreeRow>
          {rows.map(r => (
            <TreeRow key={r.text}>
              <Twisty $w={r.pad} $pl={r.open ? 81 : 82}>{r.leaf ? null : r.open ? <TwistyOpen /> : <TwistyShut />}</Twisty>
              <Node $w={r.w}>
                {r.icons.map((ic, i) => <NodeIcon key={i}>{ic}</NodeIcon>)}
                <NodeText $nested={r.icons.length > 1}>{r.text}</NodeText>
              </Node>
            </TreeRow>
          ))}
        </Browser>
        <ViewCube><CubeText>BOTTOM</CubeText></ViewCube>
        <AxisLine $c="#ff8080" $x={2842} $y={73} $w={126} $h={2} />
        <AxisLine $c="#80ff80" $x={2842} $y={74} $w={2} $h={124} />
        <AxisName $c="#ff8585" $x={2967} $y={58}>X</AxisName>
        <AxisName $c="#8bff8b" $x={2827} $y={198}>Y</AxisName>
        <NavTools />
      </Canvas>

      <Divider />
      <Timeline>
        <Playback><PlaybackIcons /></Playback>
        <Features>
          <FeatureRow>
            <SketchEdit /><Extrude s={32} /><Extrude s={32} /><Extrude s={32} /><Extrude s={32} /><Combine s={32} /><Shell s={32} />
          </FeatureRow>
          <Rail>{[0, 1, 2, 3, 4, 5, 6].map(i => <Tick key={i} />)}</Rail>
        </Features>
        <Marker><Svg s={24} h={64}><P fill={C.icon} d="M0 0H24V8L14 18V64H10V18L0 8z" /></Svg></Marker>
        <Settings><Gear /></Settings>
      </Timeline>
    </Screen>
  );
}
